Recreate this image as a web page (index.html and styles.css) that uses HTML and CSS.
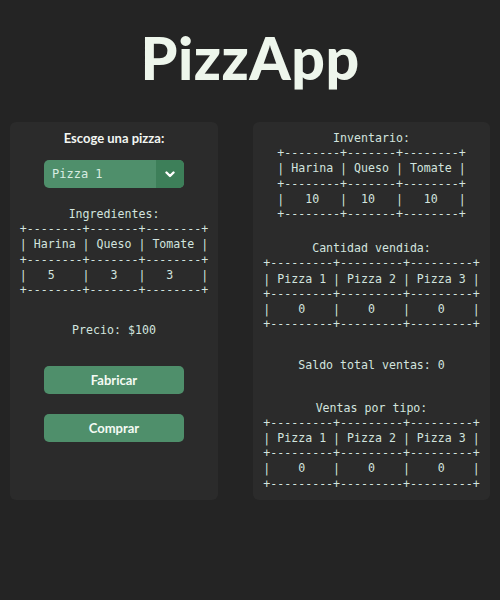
FILE: index.html
```html
<!DOCTYPE html>
<html lang="es">
<head>
<meta charset="utf-8">
<title>PizzApp</title>
<link rel="stylesheet" href="styles.css">
</head>
<body>
<h1 class="title">PizzApp</h1>
<main class="columns">
  <section class="panel panel-left">
    <div class="choose">Escoge una pizza:</div>
    <div class="select">
      <span class="select-value">Pizza 1</span>
      <span class="select-arrow">
        <svg width="10" height="7" viewBox="0 0 10 7"><polyline points="1.5,1.5 5,5 8.5,1.5" fill="none" stroke="#ffffff" stroke-width="2.4" stroke-linecap="round" stroke-linejoin="round"/></svg>
      </span>
    </div>
    <div class="block ingredients">
      <div class="label">Ingredientes:</div>
<pre class="ascii">+--------+-------+--------+
| Harina | Queso | Tomate |
+--------+-------+--------+
|   5    |   3   |   3    |
+--------+-------+--------+</pre>
    </div>
    <div class="block price">Precio: $100</div>
    <button class="btn btn-make">Fabricar</button>
    <button class="btn btn-buy">Comprar</button>
  </section>
  <section class="panel panel-right">
    <div class="block inventory">
      <div class="label">Inventario:</div>
<pre class="ascii">+--------+-------+--------+
| Harina | Queso | Tomate |
+--------+-------+--------+
|   10   |  10   |   10   |
+--------+-------+--------+</pre>
    </div>
    <div class="block sold">
      <div class="label">Cantidad vendida:</div>
<pre class="ascii">+---------+---------+---------+
| Pizza 1 | Pizza 2 | Pizza 3 |
+---------+---------+---------+
|    0    |    0    |    0    |
+---------+---------+---------+</pre>
    </div>
    <div class="block total">Saldo total ventas: 0</div>
    <div class="block bytype">
      <div class="label">Ventas por tipo:</div>
<pre class="ascii">+---------+---------+---------+
| Pizza 1 | Pizza 2 | Pizza 3 |
+---------+---------+---------+
|    0    |    0    |    0    |
+---------+---------+---------+</pre>
    </div>
  </section>
</main>
</body>
</html>
```
FILE: styles.css
```css
html, body {
  margin: 0;
  padding: 0;
  background: #242424;
  height: 100%;
}

body {
  font-family: "DejaVu Sans Mono", monospace;
  color: #d2e4df;
}

.title {
  margin: 0;
  padding-top: 22px;
  height: 122px;
  box-sizing: border-box;
  text-align: center;
  font-family: Lato, "Open Sans", sans-serif;
  font-weight: 900;
  font-size: 59px;
  line-height: 72px;
  color: #eef6ec;
  letter-spacing: 0.5px;
}

.columns {
  display: flex;
  gap: 35px;
  padding: 0 10px;
}

.panel {
  background: #2b2b2b;
  border-radius: 6px;
  height: 378px;
  box-sizing: border-box;
  display: flex;
  flex-direction: column;
  align-items: center;
}

.panel-left {
  width: 208px;
  padding-top: 8px;
}

.panel-right {
  width: 237px;
  padding-top: 9px;
}

.choose {
  font-family: Lato, "Open Sans", sans-serif;
  font-weight: 700;
  font-size: 13px;
  line-height: 16px;
  color: #f2f6f2;
}

.select {
  margin-top: 14px;
  width: 140px;
  height: 28px;
  border-radius: 5px;
  background: #4f8f6b;
  display: flex;
  overflow: hidden;
}

.select-value {
  flex: 1;
  padding-left: 8px;
  font-size: 12px;
  line-height: 28px;
  color: #d8ece2;
}

.select-arrow {
  width: 28px;
  background: #3d7f59;
  display: flex;
  align-items: center;
  justify-content: center;
}

.block {
  text-align: center;
  font-size: 11.6px;
  line-height: 15.2px;
}

.label {
  white-space: pre;
}

.ascii {
  margin: 0;
  font-family: inherit;
  font-size: inherit;
  line-height: inherit;
  text-align: left;
  display: inline-block;
}

.ingredients {
  margin-top: 19px;
}

.price {
  margin-top: 25px;
}

.btn {
  display: block;
  width: 140px;
  height: 28px;
  border: 0;
  border-radius: 5px;
  background: #4f8f6b;
  color: #f4faf4;
  font-family: Lato, "Open Sans", sans-serif;
  font-weight: 700;
  font-size: 13px;
  padding: 0;
  cursor: pointer;
}

.btn-make {
  margin-top: 28px;
}

.btn-buy {
  margin-top: 20px;
}

.sold {
  margin-top: 19px;
}

.total {
  margin-top: 26px;
}

.bytype {
  margin-top: 27px;
}
```
